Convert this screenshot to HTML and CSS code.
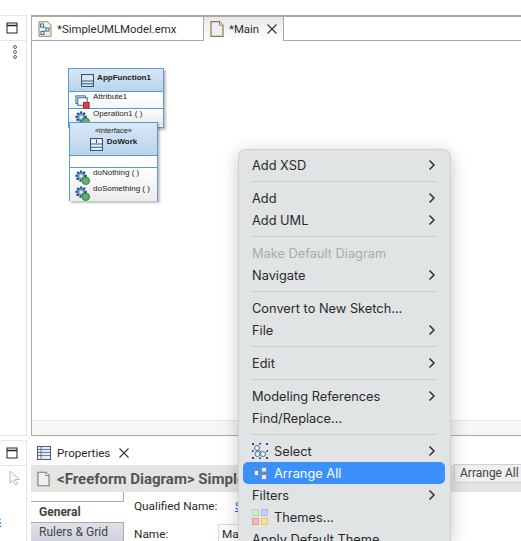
FILE: index.html
```html
<!DOCTYPE html>
<html lang="en">
<head>
    <meta charset="UTF-8">
    <meta name="viewport" content="width=device-width, initial-scale=1.0">
    <title>Main - Freeform Diagram</title>
    <link rel="stylesheet" href="styles.css">
</head>
<body>
    <svg class="defs" width="0" height="0">
        <symbol id="chev" viewBox="0 0 8 12"><polyline points="1.5,1.5 6,6 1.5,10.5" fill="none" stroke="#333" stroke-width="1.5"/></symbol>
        <symbol id="win" viewBox="0 0 12 12"><rect x="1" y="1" width="10" height="10" fill="none" stroke="#222" stroke-width="1"/><line x1="1" y1="3.5" x2="11" y2="3.5" stroke="#222" stroke-width="1.5"/></symbol>
        <symbol id="page" viewBox="0 0 14 16"><path d="M1 .7H9.5L13 4.2V15.3H1Z" fill="#e9f0f8" stroke="#8a7a4a" stroke-width="1.2"/><path d="M9.5 .7V4.2H13" fill="#fff" stroke="#8a7a4a"/></symbol>
        <symbol id="gear" viewBox="0 0 16 16"><circle cx="6.5" cy="6.500" r="4.8" fill="#6f9ccc" stroke="#1d4d8c" stroke-width="2.600" stroke-dasharray="2 1.500"/><circle cx="6.5" cy="6.500" r="1.800" fill="#e8f0f8"/><circle cx="11.500" cy="11.500" r="4" fill="#5fb55f" stroke="#2f7d3a"/></symbol>
    </svg>

    <div class="workbench">
        <aside class="side-panel">
            <div class="side-head"><svg class="win-icon"><use href="#win"/></svg></div>
            <div class="side-dots"><i></i><i></i><i></i></div>
        </aside>

        <section class="editor">
            <div class="tabs">
                <div class="tab">
                    <svg class="tab-icon" viewBox="0 0 14 16">
                        <path d="M1 .7H9.5L13 4.2V15.3H1Z" fill="#f5efd8" stroke="#9a8a58"/>
                        <path d="M4 4.500 9.500 8.500 4.500 12" fill="none" stroke="#2b6ca3" stroke-width=".8"/>
                        <g fill="#fff" stroke="#2b6ca3"><rect x="2.500" y="3" width="3" height="3"/><rect x="8" y="7" width="3" height="3"/><rect x="3" y="10.500" width="3" height="3"/></g>
                    </svg>
                    *SimpleUMLModel.emx
                </div>
                <div class="tab tab-active">
                    <svg class="tab-icon"><use href="#page"/></svg>
                    *Main
                    <svg class="tab-close" viewBox="0 0 10 10"><path d="M.5 .5 9.500 9.500M9.500 .5 .5 9.500" stroke="#333" stroke-width="1.100"/></svg>
                </div>
            </div>
            <div class="canvas">
                <div class="node node-class">
                    <div class="node-head">
                        <svg class="node-type" viewBox="0 0 12 12"><rect x=".5" y=".5" width="11" height="11" fill="#dce8f5" stroke="#33577f"/><path d="M.5 6.500H11.500M.5 9H11.500" stroke="#33577f"/></svg>
                        <b>AppFunction1</b>
                    </div>
                    <div class="node-row"><svg class="row-icon" viewBox="0 0 16 16"><rect x="1" y="2" width="10" height="8" fill="#eef4fb" stroke="#2b5f99"/><rect x="3" y="4" width="10" height="8" fill="#fff" stroke="#2b5f99"/><rect x="9" y="9" width="6" height="6" fill="#e0434b" stroke="#9c1f25"/></svg>Attribute1</div>
                    <div class="node-row node-sep"><svg class="row-icon"><use href="#gear"/></svg>Operation1 ( )</div>
                </div>
                <div class="node node-iface">
                    <div class="node-head node-head-tall">
                        <span class="stereo">«interface»</span>
                        <span class="iface-name">
                            <svg class="node-type" viewBox="0 0 12 12"><rect x=".5" y=".5" width="11" height="11" fill="#eef4fb" stroke="#33577f"/><path d="M.5 5.500H11.500M.5 8.500H11.500" stroke="#33577f"/><path d="M6 1.500V4.500" stroke="#1b4f8f"/></svg>
                            <b>DoWork</b>
                        </span>
                    </div>
                    <div class="node-blank"></div>
                    <div class="node-ops">
                        <div class="node-row"><svg class="row-icon"><use href="#gear"/></svg>doNothing ( )</div>
                        <div class="node-row"><svg class="row-icon"><use href="#gear"/></svg>doSomething ( )</div>
                    </div>
                </div>
            </div>
            <div class="canvas-foot"></div>
        </section>

        <aside class="side-panel side-bottom">
            <div class="side-head"><svg class="win-icon"><use href="#win"/></svg></div>
            <svg class="pointer" viewBox="0 0 12 16"><path d="M1 1V13L4 10.500 6.500 15 8.500 14 6 9.500H10.500Z" fill="#fafafa" stroke="#bbb"/></svg>
            <span class="side-link">s</span>
        </aside>

        <section class="props">
            <div class="props-tabs">
                <div class="props-tab">
                    <svg class="props-icon" viewBox="0 0 14 14"><rect x=".5" y=".5" width="13" height="13" fill="#e6ebf3" stroke="#47628a"/><path d="M.5 3.500H13.500M.5 6.500H13.500M.5 9.500H13.500M4 .5V13.500" stroke="#47628a" stroke-width=".8"/></svg>
                    Properties
                    <svg class="tab-close" viewBox="0 0 10 10"><path d="M.5 .5 9.500 9.500M9.500 .5 .5 9.500" stroke="#333" stroke-width="1.100"/></svg>
                </div>
            </div>
            <div class="props-title">
                <svg class="props-page"><use href="#page"/></svg>
                <span>&lt;Freeform Diagram&gt; SimpleUMLModel</span>
            </div>
            <div class="props-body">
                <div class="section-list">
                    <div class="section-top"></div>
                    <div class="section section-on">General</div>
                    <div class="section">Rulers &amp; Grid</div>
                </div>
                <div class="fields">
                    <div class="field"><label>Qualified Name:</label><a class="field-link">SimpleUMLModel</a></div>
                    <div class="field field-name"><label>Name:</label><span class="field-input">Main</span></div>
                </div>
            </div>
        </section>
    </div>

    <div class="tooltip">Arrange All</div>

    <div class="menu">
        <div class="item">Add XSD<svg class="chev"><use href="#chev"/></svg></div>
        <div class="sep"></div>
        <div class="item">Add<svg class="chev"><use href="#chev"/></svg></div>
        <div class="item">Add UML<svg class="chev"><use href="#chev"/></svg></div>
        <div class="sep"></div>
        <div class="item item-off">Make Default Diagram</div>
        <div class="item">Navigate<svg class="chev"><use href="#chev"/></svg></div>
        <div class="sep"></div>
        <div class="item">Convert to New Sketch...</div>
        <div class="item">File<svg class="chev"><use href="#chev"/></svg></div>
        <div class="sep"></div>
        <div class="item">Edit<svg class="chev"><use href="#chev"/></svg></div>
        <div class="sep"></div>
        <div class="item">Modeling References<svg class="chev"><use href="#chev"/></svg></div>
        <div class="item">Find/Replace...</div>
        <div class="sep"></div>
        <div class="item">
            <svg class="item-icon" viewBox="0 0 16 16">
                <path d="M5 5 11 11M5 11H11M5 5V11" stroke="#4a6f9c" fill="none"/>
                <g fill="#eef2f6" stroke="#4a6f9c"><circle cx="5" cy="5" r="2.500"/><circle cx="5.500" cy="11" r="2.500"/><circle cx="11" cy="11" r="2.500"/></g>
                <g fill="#1f4f8c"><rect x="0" y="0" width="2" height="2"/><rect x="14" y="0" width="2" height="2"/><rect x="0" y="14" width="2" height="2"/><rect x="14" y="14" width="2" height="2"/><rect x="7" y="0" width="2" height="1.500"/><rect x="0" y="7" width="1.500" height="2"/><rect x="14.500" y="7" width="1.500" height="2"/><rect x="7" y="14.500" width="2" height="1.500"/></g>
            </svg>
            Select<svg class="chev"><use href="#chev"/></svg>
        </div>
        <div class="item item-on">
            <svg class="item-icon" viewBox="0 0 16 16">
                <g fill="#e8edf2" stroke="#7d8ea3"><rect x="2.500" y="5.500" width="4" height="5"/><rect x="9.500" y="2.500" width="5" height="4.500"/><rect x="9.500" y="9.500" width="5" height="5"/></g>
            </svg>
            Arrange All
        </div>
        <div class="item">Filters<svg class="chev"><use href="#chev"/></svg></div>
        <div class="item">
            <svg class="item-icon" viewBox="0 0 16 16">
                <rect x=".5" y=".5" width="6" height="6" fill="#c8f0c0" stroke="#b5d8ae"/>
                <rect x="9.500" y=".5" width="6" height="6" fill="#cfcdf7" stroke="#b5b3e0"/>
                <rect x=".5" y="9.500" width="6" height="6" fill="#f8b6b6" stroke="#e09a9a"/>
                <rect x="9.500" y="9.500" width="6" height="6" fill="#fbe08a" stroke="#e5c76f"/>
            </svg>
            Themes...
        </div>
        <div class="item">Apply Default Theme</div>
    </div>
</body>
</html>
```

FILE: styles.css
```css
html, body {
    margin: 0;
    height: 100%;
    overflow: hidden;
}
body {
    font-family: Roboto, "Noto Sans", sans-serif;
    font-size: 12px;
    color: #2b2b2b;
    background-color: #fff;
}
.defs {
    display: block;
}
.workbench {
    display: grid;
    grid-template-columns: 27px 1fr;
    grid-template-rows: 421px 101px;
    column-gap: 4px;
    row-gap: 4px;
    padding-top: 15px;
}

/* left rail */
.side-panel {
    border-right: 1px solid #e4e4e4;
    border-top: 1px solid #e4e4e4;
    border-bottom: 1px solid #e4e4e4;
    box-sizing: border-box;
}
.side-head {
    height: 24px;
    display: flex;
    align-items: center;
    justify-content: center;
    border-bottom: 1px solid #e4e4e4;
    padding-right: 3px;
}
.win-icon {
    width: 12px;
    height: 12px;
}
.side-dots {
    display: flex;
    flex-direction: column;
    gap: 1px;
    align-items: center;
    padding-top: 4px;
    padding-left: 4px;
}
.side-dots i {
    width: 2px;
    height: 2px;
    border: 1px solid #666;
    border-radius: 50%;
}
.side-bottom {
    display: flex;
    flex-direction: column;
    border-bottom: 0;
    overflow: hidden;
}
.pointer {
    width: 12px;
    height: 16px;
    margin: 4px 0 0 9px;
    flex: none;
}
.side-link {
    margin-top: 29px;
    color: #1a5fd0;
    text-decoration: underline;
    line-height: 12px;
    margin-left: -5px;
}

/* editor */
.editor {
    border: 2px solid #aaa;
    border-width: 2px 0 1px 1px;
    display: flex;
    flex-direction: column;
    background-color: #fff;
}
.tabs {
    display: flex;
    height: 24px;
    box-sizing: border-box;
    border-bottom: 1px solid #aaa;
    flex: none;
}
.tab {
    display: flex;
    align-items: center;
    gap: 5px;
    width: 171px;
    padding-left: 6px;
    box-sizing: border-box;
    height: 23px;
    font-size: 11.4px;
}
.tab-active {
    width: 81px;
    height: 24px;
    border: 1px solid #aaa;
    border-width: 0 1px;
    background: linear-gradient(#e8e8e8, #fff);
}
.tab-icon {
    width: 14px;
    height: 16px;
    flex: none;
}
.tab-close {
    width: 10px;
    height: 10px;
    margin-left: 3px;
    flex: none;
}
.canvas {
    position: relative;
    flex: 1;
}
.canvas-foot {
    height: 14px;
    border-top: 1px solid #e6e6e6;
    background-color: #f6f6f6;
    flex: none;
}

/* diagram nodes */
.node {
    position: absolute;
    box-sizing: border-box;
    border: 1px solid #5b9bd5;
    background-color: #fff;
    font-family: "Liberation Sans", Arial, sans-serif;
    font-size: 8px;
    color: #222;
    box-shadow: 2px 2px 2px rgba(0, 0, 0, 0.25);
}
.node-class {
    left: 36px;
    top: 27px;
    width: 96px;
    height: 60px;
}
.node-iface {
    left: 37px;
    top: 81px;
    width: 89px;
    height: 79px;
}
.node-head {
    height: 22px;
    display: flex;
    align-items: center;
    justify-content: center;
    gap: 3px;
    border-bottom: 1px solid #5b9bd5;
    background: linear-gradient(#d9e8f6, #b9d3ec);
}
.node-head b {
    margin-bottom: 6px;
}
.node-head-tall {
    flex-direction: column;
    justify-content: flex-start;
    padding-top: 3px;
    box-sizing: border-box;
    height: 33px;
    gap: 0;
}
.stereo {
    font-size: 7.5px;
    line-height: 10px;
}
.iface-name {
    display: flex;
    align-items: center;
    gap: 4px;
    margin-top: 1px;
}
.node-type {
    width: 13px;
    height: 13px;
}
.node-row {
    height: 16px;
    display: flex;
    gap: 3px;
    padding-left: 6px;
    line-height: 10px;
    background: linear-gradient(#fff, #f6f6f6);
}
.node-sep {
    border-top: 1px solid #5b9bd5;
    background: linear-gradient(#fff, #e9e9e9);
}
.node-blank {
    height: 11px;
    border-bottom: 1px solid #5b9bd5;
}
.node-ops {
    height: 33px;
    background: linear-gradient(#fff, #ebebeb);
}
.node-ops .node-row {
    background: none;
    padding-left: 5px;
}
.row-icon {
    width: 15px;
    height: 15px;
    margin-top: 2px;
    flex: none;
}

/* properties view */
.props {
    display: flex;
    flex-direction: column;
    min-width: 0;
    overflow: hidden;
}
.props-tabs {
    height: 25px;
    flex: none;
}
.props-tab {
    display: flex;
    align-items: center;
    gap: 6px;
    width: 105px;
    height: 25px;
    box-sizing: border-box;
    padding-left: 6px;
    font-size: 11.6px;
    background-color: #fff;
}
.props-icon {
    width: 14px;
    height: 14px;
    flex: none;
}
.props-title {
    height: 27px;
    flex: none;
    display: flex;
    align-items: center;
    gap: 7px;
    padding-left: 6px;
    background-color: #e4e4e4;
    font-weight: 700;
    font-size: 15px;
    color: #555;
    white-space: nowrap;
    overflow: hidden;
}
.props-page {
    width: 13px;
    height: 16px;
    flex: none;
}
.props-body {
    display: flex;
    gap: 10px;
}
.section-list {
    width: 93px;
    flex: none;
    border-right: 1px solid #aaa;
    box-sizing: border-box;
}
.section-top {
    height: 9px;
    border-bottom: 1px solid #aaa;
}
.section {
    height: 19px;
    line-height: 19px;
    padding-left: 8px;
    font-size: 12px;
    color: #444;
    background: linear-gradient(#dfe1e8, #cfd2dc);
    border-top: 1px solid #aaa;
}
.section-on {
    height: 20px;
    line-height: 21px;
    border-top: 0;
    font-weight: 700;
    background: #fff;
    margin-right: -1px;
}
.fields {
    font-size: 11.8px;
    padding-top: 6px;
}
.field {
    display: flex;
    align-items: center;
    height: 16px;
}
.field label {
    width: 101px;
    flex: none;
}
.field-name {
    height: 20px;
    margin-top: 10px;
}
.field-link {
    color: #1a5fd0;
    text-decoration: underline;
    white-space: nowrap;
}
.field-input {
    border: 1px solid #d8d8d8;
    padding: 2px 3px;
    margin-left: -17px;
}

/* context menu and tooltip */
.tooltip {
    position: absolute;
    left: 454px;
    top: 464px;
    width: 80px;
    height: 19px;
    line-height: 17px;
    padding-left: 5px;
    font-size: 12px;
    color: #444;
    background-color: #efefef;
    border: 1px solid #d2d2d2;
    box-sizing: border-box;
    white-space: nowrap;
}
.menu {
    position: absolute;
    left: 238px;
    top: 149px;
    width: 213px;
    height: 392px;
    box-sizing: border-box;
    padding: 4px 5px 0 4px;
    background-color: #e0e4e4;
    border: 1px solid #cfd2d2;
    border-bottom: 0;
    border-radius: 8px 8px 0 0;
    box-shadow: 0 4px 18px rgba(0, 0, 0, 0.22);
    font-family: Inter, "Noto Sans", sans-serif;
    font-size: 12.8px;
    color: #2a2a2a;
    overflow: hidden;
}
.item {
    height: 22px;
    display: flex;
    align-items: center;
    padding: 0 9px;
    border-radius: 5px;
    white-space: nowrap;
}
.item-off {
    color: #a9adad;
}
.item-on {
    background-color: #3b90fb;
    color: #fff;
}
.item-icon {
    width: 16px;
    height: 16px;
    margin-right: 6px;
    flex: none;
}
.chev {
    width: 8px;
    height: 12px;
    margin-left: auto;
}
.sep {
    height: 1px;
    margin: 5px 9px;
    background-color: #c8cccc;
}
```
